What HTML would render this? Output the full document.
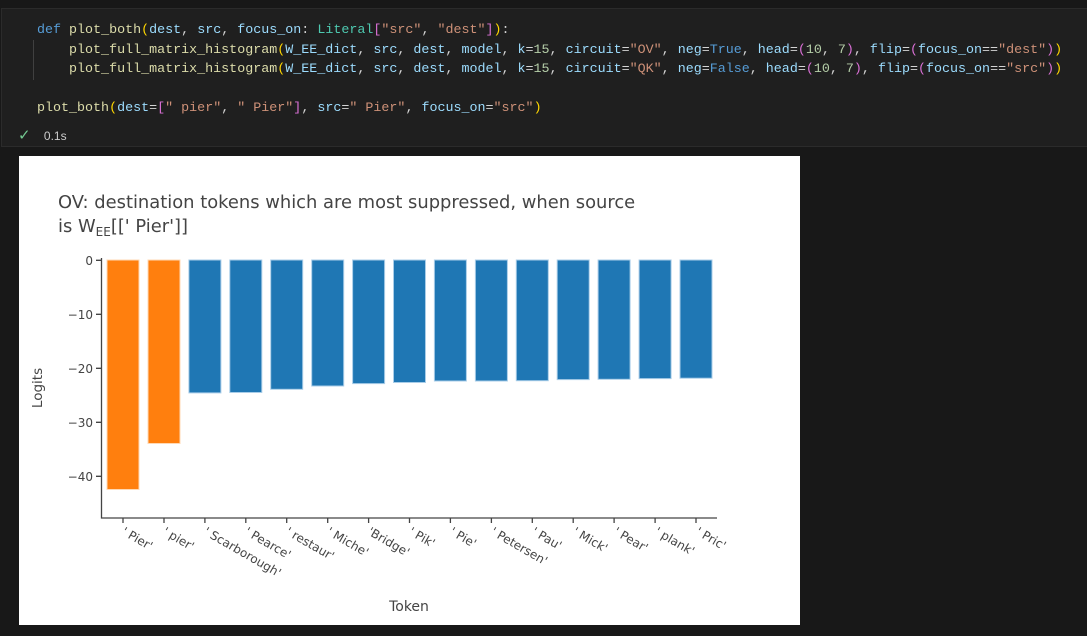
<!DOCTYPE html>
<html><head><meta charset="utf-8"><style>
html,body{margin:0;padding:0;width:1087px;height:636px;background:#181818;overflow:hidden;}
.cell{position:absolute;left:1px;top:8px;width:1100px;height:137px;background:#1f1f1f;border-top:1px solid #2b2b2b;border-bottom:1px solid #2b2b2b;border-left:1px solid #2b2b2b;}
.code{position:absolute;left:37px;top:21px;font-family:"Liberation Mono",monospace;font-size:13.35px;line-height:19.5px;color:#d4d4d4;white-space:pre;}
.k{color:#569cd6}.f{color:#dcdcaa}.p{color:#9cdcfe}.t{color:#4ec9b0}.s{color:#ce9178}.n{color:#b5cea8}.b1{color:#ffd700}.b2{color:#da70d6}
.guide{position:absolute;left:33px;top:40px;width:1px;height:40px;background:#404040;}
.status{position:absolute;left:18px;top:126px;font-family:"Liberation Sans",sans-serif;font-size:12px;color:#cccccc;}
.plot{position:absolute;left:19px;top:156px;width:781px;height:469px;background:#fff;}
</style></head><body>
<div class="cell"></div>
<div class="guide"></div>
<div class="code"><span class="k">def</span> <span class="f">plot_both</span><span class="b1">(</span><span class="p">dest</span>, <span class="p">src</span>, <span class="p">focus_on</span>: <span class="t">Literal</span><span class="b2">[</span><span class="s">"src"</span>, <span class="s">"dest"</span><span class="b2">]</span><span class="b1">)</span>:
    <span class="f">plot_full_matrix_histogram</span><span class="b1">(</span><span class="p">W_EE_dict</span>, <span class="p">src</span>, <span class="p">dest</span>, <span class="p">model</span>, <span class="p">k</span>=<span class="n">15</span>, <span class="p">circuit</span>=<span class="s">"OV"</span>, <span class="p">neg</span>=<span class="k">True</span>, <span class="p">head</span>=<span class="b2">(</span><span class="n">10</span>, <span class="n">7</span><span class="b2">)</span>, <span class="p">flip</span>=<span class="b2">(</span><span class="p">focus_on</span>==<span class="s">"dest"</span><span class="b2">)</span><span class="b1">)</span>
    <span class="f">plot_full_matrix_histogram</span><span class="b1">(</span><span class="p">W_EE_dict</span>, <span class="p">src</span>, <span class="p">dest</span>, <span class="p">model</span>, <span class="p">k</span>=<span class="n">15</span>, <span class="p">circuit</span>=<span class="s">"QK"</span>, <span class="p">neg</span>=<span class="k">False</span>, <span class="p">head</span>=<span class="b2">(</span><span class="n">10</span>, <span class="n">7</span><span class="b2">)</span>, <span class="p">flip</span>=<span class="b2">(</span><span class="p">focus_on</span>==<span class="s">"src"</span><span class="b2">)</span><span class="b1">)</span>

<span class="f">plot_both</span><span class="b1">(</span><span class="p">dest</span>=<span class="b2">[</span><span class="s">" pier"</span>, <span class="s">" Pier"</span><span class="b2">]</span>, <span class="p">src</span>=<span class="s">" Pier"</span>, <span class="p">focus_on</span>=<span class="s">"src"</span><span class="b1">)</span></div>
<div class="status"><span style="color:#73c991;font-size:15px">✓</span>&nbsp;&nbsp;&nbsp;&nbsp;0.1s</div>
<div class="plot"></div>
<svg width="1087" height="636" style="position:absolute;left:0;top:0" font-family="DejaVu Sans, sans-serif">
<text x="58" y="208" font-size="17.9" fill="#444">OV: destination tokens which are most suppressed, when source</text>
<text x="58" y="232" font-size="17.9" fill="#444">is W<tspan font-size="12" dy="4">EE</tspan><tspan dy="-4">[[' Pier']]</tspan></text>
<g stroke-width="1">
<rect x="107" y="260" width="32" height="229.5" fill="#ff7f0e" stroke="#ffd9b5"/>
<rect x="148" y="260" width="32" height="183.5" fill="#ff7f0e" stroke="#ffd9b5"/>
</g>
<g fill="#1f77b4" stroke="#a9cde8">
<rect x="188.9" y="260" width="32" height="132.9"/>
<rect x="229.8" y="260" width="32" height="132.5"/>
<rect x="270.7" y="260" width="32" height="129.3"/>
<rect x="311.7" y="260" width="32" height="126"/>
<rect x="352.6" y="260" width="32" height="123.6"/>
<rect x="393.5" y="260" width="32" height="122.5"/>
<rect x="434.4" y="260" width="32" height="121"/>
<rect x="475.4" y="260" width="32" height="121"/>
<rect x="516.3" y="260" width="32" height="120.7"/>
<rect x="557.2" y="260" width="32" height="119.6"/>
<rect x="598.1" y="260" width="32" height="119.3"/>
<rect x="639.1" y="260" width="32" height="118.6"/>
<rect x="680" y="260" width="32" height="118.2"/>
</g>
<g stroke="#444" stroke-width="1.3" fill="none">
<path d="M101.5 258V518H717"/>
<path d="M96 260.3H101.5M96 314.3H101.5M96 368.3H101.5M96 422.3H101.5M96 476.3H101.5"/>
<path d="M123 518v5M164 518v5M204.9 518v5M245.8 518v5M286.7 518v5M327.7 518v5M368.6 518v5M409.5 518v5M450.4 518v5M491.4 518v5M532.3 518v5M573.2 518v5M614.1 518v5M655.1 518v5M696 518v5"/>
</g>
<g font-size="12" fill="#444" text-anchor="end">
<text x="93" y="265">0</text>
<text x="93" y="319">−10</text>
<text x="93" y="373">−20</text>
<text x="93" y="427">−30</text>
<text x="93" y="481">−40</text>
</g>
<text transform="translate(42,388) rotate(-90)" font-size="13.5" fill="#444" text-anchor="middle">Logits</text>
<g font-size="12" fill="#444">
<text transform="translate(121,534) rotate(30)">' Pier'</text>
<text transform="translate(162,534) rotate(30)">' pier'</text>
<text transform="translate(203,534) rotate(30)">' Scarborough'</text>
<text transform="translate(244,534) rotate(30)">' Pearce'</text>
<text transform="translate(285,534) rotate(30)">' restaur'</text>
<text transform="translate(326,534) rotate(30)">' Miche'</text>
<text transform="translate(367,534) rotate(30)">'Bridge'</text>
<text transform="translate(408,534) rotate(30)">' Pik'</text>
<text transform="translate(449,534) rotate(30)">' Pie'</text>
<text transform="translate(490,534) rotate(30)">' Petersen'</text>
<text transform="translate(531,534) rotate(30)">' Pau'</text>
<text transform="translate(572,534) rotate(30)">' Mick'</text>
<text transform="translate(613,534) rotate(30)">' Pear'</text>
<text transform="translate(654,534) rotate(30)">' plank'</text>
<text transform="translate(695,534) rotate(30)">' Pric'</text>
</g>
<text x="409" y="611" font-size="14" fill="#444" text-anchor="middle">Token</text>
</svg>
</body></html>
